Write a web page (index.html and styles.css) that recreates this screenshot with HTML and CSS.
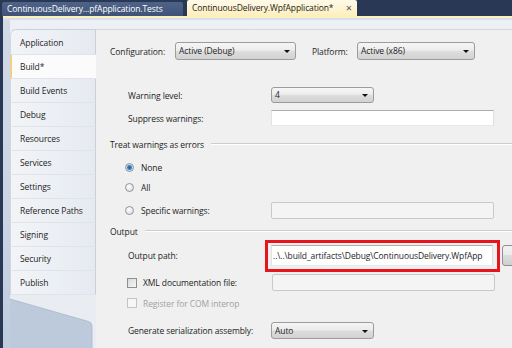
FILE: index.html
```html
<!DOCTYPE html>
<html lang="en">
<head>
    <meta charset="utf-8" />
    <title>Build properties</title>
    <link rel="stylesheet" href="styles.css">
</head>
<body>
    <div class="doc-tabs">
        <div class="doc-tab">ContinuousDelivery...pfApplication.Tests</div>
        <div class="doc-tab active">ContinuousDelivery.WpfApplication*<span class="close">&#x2715;</span></div>
    </div>
    <div class="doc-well"></div>

    <div class="designer">
        <div class="sidebar">
            <ul class="side-tabs">
                <li class="first">Application</li>
                <li class="selected">Build*</li>
                <li>Build Events</li>
                <li>Debug</li>
                <li>Resources</li>
                <li>Services</li>
                <li>Settings</li>
                <li>Reference Paths</li>
                <li>Signing</li>
                <li>Security</li>
                <li>Publish</li>
            </ul>
            <div class="side-tail">
                <svg width="86" height="60" viewBox="0 0 86 60">
                    <rect x="0" y="0" width="86" height="60" fill="#bccadb" />
                    <path d="M0 0 H86 V60 H82 V31 Q82 27.5 78.5 26.5 L0 4 Z" fill="#e9edf2" />
                    <path d="M0 4 L78.5 26.5 Q82 27.5 82 31 V60" fill="none" stroke="#a9b8cd" stroke-width="0.8" />
                </svg>
            </div>
        </div>

        <div class="page">
            <div class="config-bar">
                <span class="cfg-label">Configuration:</span>
                <div class="combo combo-config">Active (Debug)</div>
                <span class="cfg-label platform">Platform:</span>
                <div class="combo combo-platform">Active (x86)</div>
            </div>

            <div class="row r-warn">
                <span class="lbl">Warning level:</span>
                <div class="combo combo-small">4</div>
            </div>
            <div class="row r-suppress">
                <span class="lbl">Suppress warnings:</span>
                <div class="textbox"></div>
            </div>

            <div class="group r-treat">
                <span>Treat warnings as errors</span>
                <div class="group-line"></div>
            </div>
            <div class="row opt r-none">
                <span class="radio checked"></span>
                <span class="opt-lbl">None</span>
            </div>
            <div class="row opt r-all">
                <span class="radio"></span>
                <span class="opt-lbl">All</span>
            </div>
            <div class="row opt r-specific">
                <span class="radio"></span>
                <span class="opt-lbl">Specific warnings:</span>
                <div class="textbox disabled"></div>
            </div>

            <div class="group r-output">
                <span>Output</span>
                <div class="group-line"></div>
            </div>
            <div class="row r-path">
                <span class="lbl">Output path:</span>
                <div class="textbox path">..\..\build_artifacts\Debug\ContinuousDelivery.WpfApp<span class="highlight"></span></div>
                <div class="browse"></div>
            </div>
            <div class="row opt r-xml">
                <span class="check"></span>
                <span class="opt-lbl">XML documentation file:</span>
                <div class="textbox disabled"></div>
            </div>
            <div class="row opt r-com">
                <span class="check disabled"></span>
                <span class="opt-lbl muted">Register for COM interop</span>
            </div>
            <div class="row r-gen">
                <span class="lbl">Generate serialization assembly:</span>
                <div class="combo combo-small">Auto</div>
            </div>
        </div>
    </div>
</body>
</html>
```

FILE: styles.css
```css
* {
    margin: 0;
    padding: 0;
    box-sizing: border-box;
}
body {
    width: 512px;
    height: 348px;
    overflow: hidden;
    background: #293955;
    font-family: "Open Sans", "DejaVu Sans", sans-serif;
    font-size: 8.5px;
    letter-spacing: -0.1px;
    color: #1e1e1e;
}

/* document tabs */
.doc-tabs {
    display: flex;
    align-items: flex-end;
    gap: 4px;
    height: 16px;
    padding-left: 2px;
}
.doc-tab {
    width: 181px;
    height: 14px;
    line-height: 14px;
    padding-left: 5px;
    background: linear-gradient(#4f6388, #3f5378);
    color: #ffffff;
    border-radius: 2px 2px 0 0;
    white-space: nowrap;
}
.doc-tab.active {
    display: flex;
    width: 170px;
    height: 16px;
    line-height: 16px;
    background: linear-gradient(#fffaea, #fdefbc);
    color: #1b1b1b;
}
.close {
    margin-left: auto;
    padding-right: 5px;
    color: #5a5a5a;
    font-size: 8px;
}
.doc-well {
    height: 4px;
    margin-left: 3px;
    background: #fdf0bf;
    border-bottom: 2px solid #d8e0ea;
}

/* designer frame */
.designer {
    display: flex;
    height: 328px;
    margin-left: 3px;
    padding: 9px 0 0 7px;
    background: linear-gradient(to right, rgba(180, 196, 218, 0.5) 7px, transparent 7px),
                linear-gradient(#edf0f4, #dfe5ec 60%, #c9d4e2);
}
.sidebar {
    width: 86px;
    display: flex;
    flex-direction: column;
}
.side-tabs {
    list-style: none;
}
.side-tabs li {
    height: 24px;
    line-height: 23px;
    padding-left: 9px;
    background: linear-gradient(to right, #f2f4f7, #e6eaf0);
    border-left: 1px solid #d0d8e3;
    border-right: 1px solid #c8d0dc;
    border-bottom: 1px solid #dfe4ea;
    white-space: nowrap;
}
.side-tabs li.first {
    height: 26px;
    line-height: 25px;
    border-top: 1px solid #c8d0dc;
    border-top-left-radius: 6px;
}
.side-tabs li.selected {
    background: #fbfbfb;
    border-left: 2px solid #f1cf85;
    border-right: none;
    padding-left: 8px;
}
.side-tail {
    flex: 1;
    overflow: hidden;
    background: #bccadb;
}
.side-tail svg {
    display: block;
}

/* property page */
.page {
    flex: 1;
    background: #f0f0f0;
    border-top: 1px solid #d3d9e2;
    display: flex;
    flex-direction: column;
}
.config-bar {
    display: flex;
    align-items: center;
    height: 18px;
    margin-top: 12px;
    padding-left: 14px;
}
.cfg-label {
    width: 65px;
}
.cfg-label.platform {
    width: 45px;
    margin-left: 16px;
}

.combo {
    position: relative;
    height: 18px;
    line-height: 16px;
    padding-left: 3px;
    border: 1px solid #9c9c9c;
    border-radius: 3px;
    background: linear-gradient(#f6f6f6, #ececec 45%, #dcdcdc 55%, #d2d2d2);
}
.combo::after {
    content: "";
    position: absolute;
    right: 5px;
    top: 50%;
    margin-top: -1px;
    border-left: 3px solid transparent;
    border-right: 3px solid transparent;
    border-top: 3px solid #111;
}
.combo-config {
    width: 121px;
}
.combo-platform {
    width: 118px;
}
.combo-small {
    width: 103px;
    height: 17px;
    line-height: 15px;
}

.row {
    display: flex;
    align-items: center;
    margin-left: 32px;
}
.lbl {
    width: 143px;
    white-space: nowrap;
}
.textbox {
    width: 223px;
    height: 16px;
    background: #ffffff;
    border: 1px solid #abadb3;
    border-color: #abadb3 #dbdfe6 #e3e9ef #e2e3ea;
}
.textbox.disabled {
    height: 17px;
    background: #f4f4f4;
    border: 1px solid #c9c9c9;
    border-radius: 2px;
}
.textbox.path {
    position: relative;
    width: 222px;
    height: 21px;
    line-height: 19px;
    padding-left: 1px;
    white-space: nowrap;
}
.highlight {
    position: absolute;
    left: -7px;
    right: -8px;
    top: -6px;
    bottom: -7px;
    border: 3px solid #e8141b;
}
.browse {
    width: 30px;
    height: 21px;
    margin-left: 9px;
    border: 1px solid #8e8f8f;
    border-radius: 3px;
    background: linear-gradient(#f2f2f2, #ebebeb 50%, #dddddd 50%, #cfcfcf);
}

.group {
    display: flex;
    align-items: center;
    height: 14px;
    margin-left: 14px;
}
.group-line {
    flex: 1;
    margin-left: 7px;
    border-top: 1px solid #cdcdcd;
    border-bottom: 1px solid #ffffff;
}

.opt {
    margin-left: 29px;
}
.opt-lbl {
    width: 130px;
    margin-left: 7px;
    white-space: nowrap;
}
.muted {
    color: #a2a2a2;
}
.radio {
    width: 9px;
    height: 9px;
    border-radius: 50%;
    border: 1px solid #8f9399;
    background: radial-gradient(circle at 40% 35%, #ffffff, #d6d8db);
}
.radio.checked {
    background: radial-gradient(circle, #1e5c95 0, #3b86c6 2px, #c9d9e8 3px, #eef1f4 4px);
}
.check {
    width: 10px;
    height: 10px;
    margin-left: 1px;
    border: 1px solid #8f8f8f;
    background: linear-gradient(135deg, #d8d8d8, #f7f7f7);
}
.check.disabled {
    border-color: #c4c4c4;
    background: #f6f6f6;
}

/* vertical rhythm of the build page */
.r-warn { height: 16px; margin-top: 27px; }
.r-warn .combo { height: 16px; line-height: 14px; }
.r-suppress { height: 16px; margin-top: 7px; }
.r-treat { margin-top: 11px; }
.r-none { height: 14px; margin-top: 9px; }
.r-all { height: 14px; margin-top: 6px; }
.r-specific { height: 16px; margin-top: 8px; }
.r-output { margin-top: 6px; }
.r-path { height: 21px; margin-top: 7px; }
.r-xml { height: 17px; margin-top: 8px; margin-left: 30px; }
.r-xml .opt-lbl { width: 129px; margin-left: 6px; }
.r-com { height: 14px; margin-top: 5px; margin-left: 30px; }
.r-com .opt-lbl { margin-left: 6px; }
.r-gen { height: 17px; margin-top: 12px; }
```
